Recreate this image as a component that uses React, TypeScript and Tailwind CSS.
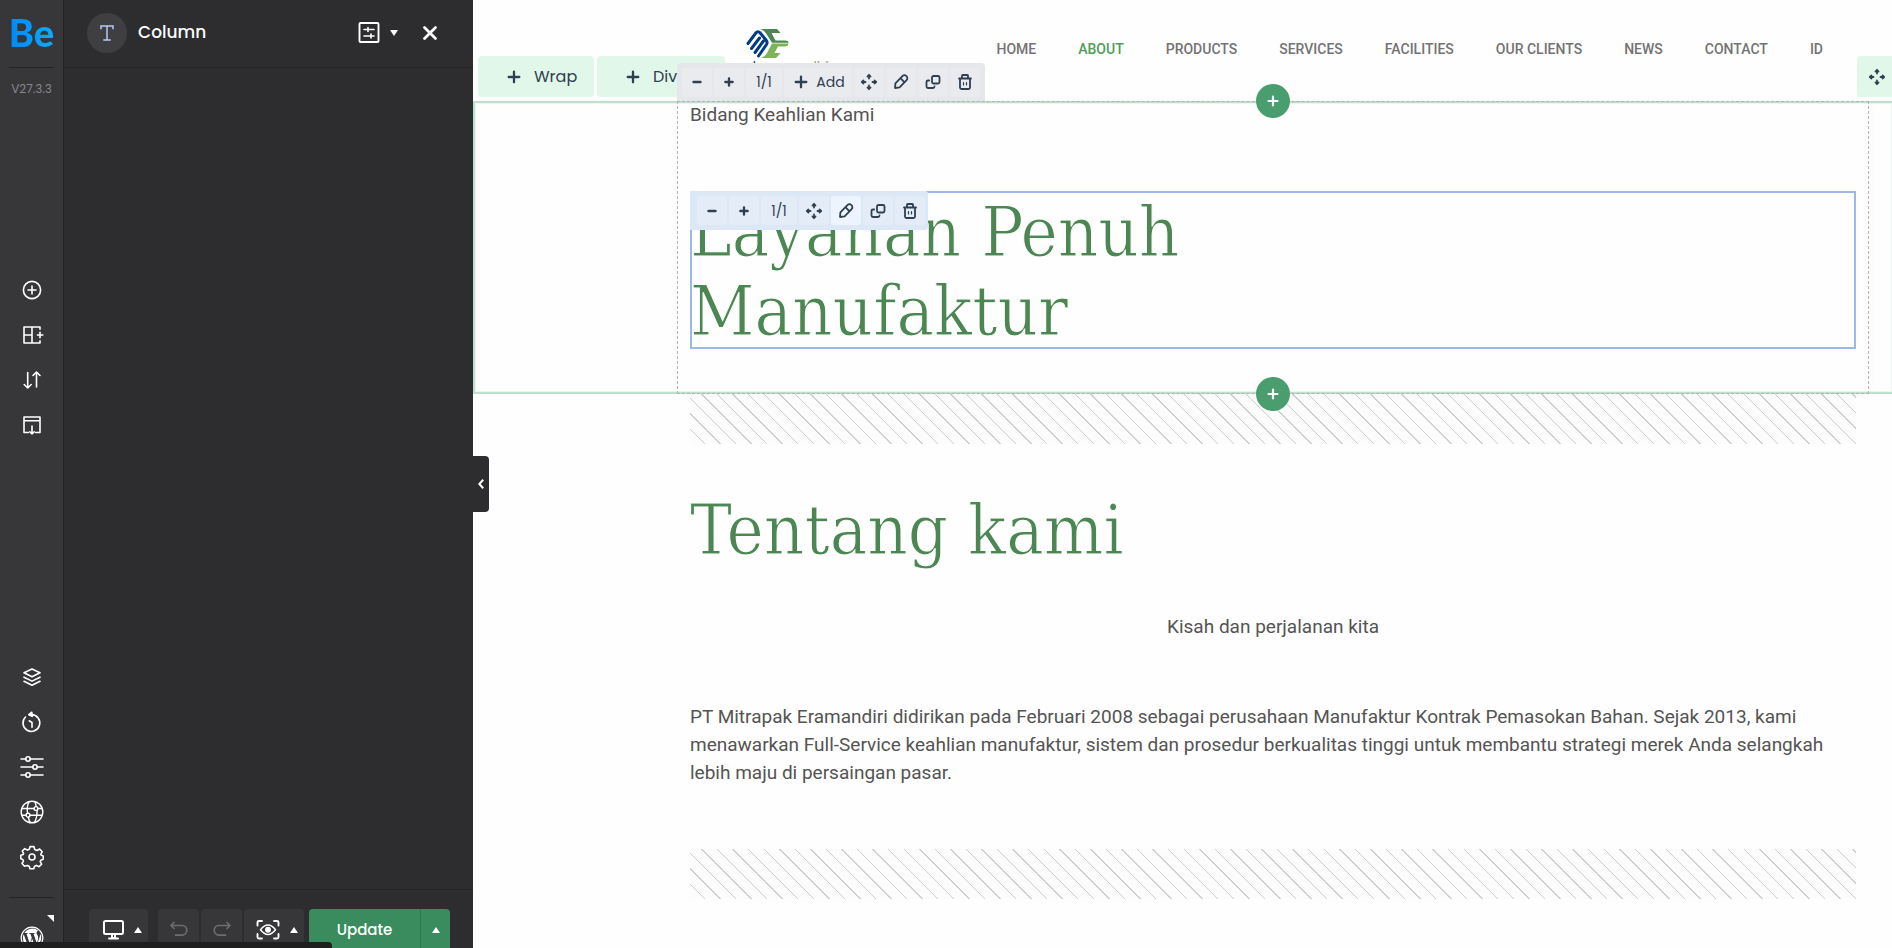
import type { ReactNode } from "react";

const uiFont = "font-['Poppins',Inter,sans-serif]";
const slabFont = "font-['Roboto_Slab','DejaVu_Serif_Condensed','DejaVu_Serif',serif] font-light [-webkit-text-stroke:1px_#fefefe]";

type IconProps = { children: ReactNode; size?: string; box?: string; width?: number };

function Icon({ children, size = "size-[26px]", box = "0 0 26 26", width = 1.6 }: IconProps) {
  return (
    <svg
      className={`${size} shrink-0`}
      viewBox={box}
      fill="none"
      stroke="currentColor"
      strokeWidth={width}
      strokeLinecap="round"
      strokeLinejoin="round"
      aria-hidden="true"
    >
      {children}
    </svg>
  );
}

const addItems = [
  {
    label: "Add element",
    icon: (
      <Icon>
        <circle cx="13" cy="13" r="8.6" />
        <path d="M13 9v8M9 13h8" />
      </Icon>
    ),
  },
  {
    label: "Prebuilt sections",
    icon: (
      <Icon>
        <path d="M21 7V5H5v16h16v-2M13 5v16M5 13h8M18.6 13h5M21 10.6v4.8" strokeLinecap="square" />
      </Icon>
    ),
  },
  {
    label: "Import / export",
    icon: (
      <Icon>
        <path d="M8.700 5.500V20.500M5.200 17.500l3.500 3.500 3.500-3.500M17.500 20V5M14 8.500l3.500-3.500L21 8.500" />
      </Icon>
    ),
  },
  {
    label: "Single page import",
    icon: (
      <Icon>
        <path d="M9.500 20.500H5V5h16v15.500h-4.500" />
        <path d="M5.500 8.800h15" strokeWidth="1.4" />
        <path d="M13 14v8M10.800 19.800 13 22l2.200-2.200" />
      </Icon>
    ),
  },
];

const toolItems = [
  {
    label: "Navigator",
    icon: (
      <Icon>
        <path d="m13 5 8 3.800-8 3.900-8-3.900zM5 13.200l8 3.900 8-3.900M5 17.300l8 3.900 8-3.900" />
      </Icon>
    ),
  },
  {
    label: "History",
    icon: (
      <Icon>
        <path d="M12.500 5.600a8.400 8.400 0 1 1-6 2.400" />
        <path d="m12.800 3.200-3 2.500 3.400 1.700z" fill="currentColor" />
        <path d="M10.200 11.800 13 13.500v4.700" />
      </Icon>
    ),
  },
  {
    label: "Theme settings",
    icon: (
      <Icon>
        <path d="M2 5h4.800M11.200 5H24M2 13h11.800M18.200 13H24M2 21h4.800M11.200 21H24" />
        <circle cx="9" cy="5" r="2.200" />
        <circle cx="16" cy="13" r="2.200" />
        <circle cx="9" cy="21" r="2.200" />
      </Icon>
    ),
  },
  {
    label: "Global sections",
    icon: (
      <Icon width={1.4}>
        <circle cx="13" cy="13" r="10.800" />
        <path d="M10 2.800C8.300 6 8 11 8.600 14.400M9.200 18c.5 2.200 1 4 2 5.500M16 2.800c.5 1.500 1 3 1.200 4.800M18 11.500c.2 4.500-.5 8.500-2.500 11.800M3.300 9.500H15M19 9.500h4M2.800 16.200h4M11 16.200h12" />
        <circle cx="17" cy="9.500" r="1.900" />
        <circle cx="9" cy="16.200" r="1.900" />
      </Icon>
    ),
  },
  {
    label: "Page options",
    icon: (
      <Icon>
        <path d="M11 2.600h4l.7 2.900 2.300 1 2.600-1.500 2.600 2.700-1.400 2.600.4 1 2 .6v3.400l-2.400.9-.6 1.500 1.400 2.500-2.600 2.600-2.600-1.400-1.900.8-.7 2.600h-3.800l-.8-2.600-1.900-.8L5.500 22.200 3 19.500l1.400-2.400-.6-1.700-2-.6v-3.500l2.300-.7.5-1.300L3.200 7 5.800 4.600l2.500 1.500 2-.8z" />
        <circle cx="13" cy="13" r="3" />
      </Icon>
    ),
  },
];

const navItems = ["HOME", "ABOUT", "PRODUCTS", "SERVICES", "FACILITIES", "OUR CLIENTS", "NEWS", "CONTACT", "ID"];

function MinusIcon() {
  return (
    <Icon size="size-5" box="0 0 20 20" width={2.4}>
      <path d="M6.500 10h7" />
    </Icon>
  );
}

function PlusIcon({ large }: { large?: boolean }) {
  return (
    <Icon size="size-5" box="0 0 20 20" width={2.3}>
      <path d={large ? "M10 4.700v10.600M4.700 10h10.600" : "M10 6.300v7.400M6.300 10h7.400"} />
    </Icon>
  );
}

function MoveIcon() {
  return (
    <Icon size="size-5" box="0 0 20 20" width={1.8}>
      <path d="M10 3v3.500M8.500 4.500 10 2.800l1.500 1.700M10 17v-3.500M8.500 15.500l1.500 1.700 1.500-1.700M3 10h3.500M4.500 8.500 2.800 10l1.700 1.500M17 10h-3.500M15.500 8.500l1.700 1.500-1.700 1.500" />
    </Icon>
  );
}

function PencilIcon() {
  return (
    <Icon size="size-5" box="0 0 20 20" width={1.8}>
      <path d="M4 16l.4-4.600 7-7.200a2.700 2.700 0 0 1 4.200 3.900L8.600 15.400zM10.200 6.800l2.800 3" />
    </Icon>
  );
}

function CloneIcon() {
  return (
    <Icon size="size-5" box="0 0 20 20" width={1.8}>
      <rect x="9" y="4" width="7.500" height="7.500" rx="1.500" />
      <path d="M6.200 8.500H5A1.500 1.500 0 0 0 3.500 10v4.500A1.500 1.500 0 0 0 5 16h5a1.500 1.500 0 0 0 1.500-1.500" />
    </Icon>
  );
}

function TrashIcon() {
  return (
    <Icon size="size-5" box="0 0 20 20" width={1.8}>
      <path d="M4 6.500h12M5 6.500v9A1.500 1.500 0 0 0 6.500 17h7a1.500 1.500 0 0 0 1.500-1.500v-9M7 6.500V3.800A.8.800 0 0 1 7.800 3h4.400a.8.800 0 0 1 .8.800v2.700" />
      <path d="M8.500 10.500v2.500M11.500 10.500v2.500" strokeWidth="1.2" />
    </Icon>
  );
}

function Caret({ down }: { down?: boolean }) {
  return (
    <svg className="h-[6px] w-2" viewBox="0 0 8 6" fill="currentColor" aria-hidden="true">
      <path d={down ? "M0 0h8L4 6z" : "M0 6h8L4 0z"} />
    </svg>
  );
}

type BarButtonProps = { label: string; className?: string; active?: boolean; children: ReactNode };

function BarButton({ label, className = "w-[30px]", active, children }: BarButtonProps) {
  return (
    <button
      aria-label={label}
      className={`flex h-[29px] items-center justify-center rounded-[3px] ${active ? "bg-[#eef4ff]" : "bg-white/20"} ${className}`}
    >
      {children}
    </button>
  );
}

function AddSection({ className }: { className: string }) {
  return (
    <button
      aria-label="Add section"
      className={`absolute left-1/2 z-20 flex size-[34px] -translate-x-1/2 items-center justify-center rounded-full bg-[#4a9d6e] text-white ${className}`}
    >
      <Icon size="size-5" box="0 0 20 20" width={2.2}>
        <path d="M10 5.500v9M5.500 10h9" />
      </Icon>
    </button>
  );
}

function Divider() {
  return (
    <div className="h-[50px] bg-[repeating-linear-gradient(45deg,#fcfcfc_0px,#fcfcfc_10px,#cfcfcf_10px,#cfcfcf_11px)]" />
  );
}

function Rail() {
  return (
    <aside className="flex w-16 shrink-0 flex-col items-center border-r border-[#232324] bg-[#37373a] text-white">
      <div className="flex h-[68px] w-[45px] items-center justify-center border-b border-[#232324] pb-1">
        <span className="bg-gradient-to-r from-[#0089f7] to-[#10aaff] bg-clip-text font-[Lato] text-[38px] leading-[48px] font-black text-transparent">
          Be
        </span>
      </div>
      <span className={`mt-3 text-[12px] leading-[18px] text-[#85858c] ${uiFont}`}>V27.3.3</span>
      <div className="flex flex-1 items-center pb-[38px]">
        <nav className="flex flex-col">
          {addItems.map((item) => (
            <button key={item.label} aria-label={item.label} className="flex size-[45px] items-center justify-center">
              {item.icon}
            </button>
          ))}
        </nav>
      </div>
      <nav className="flex flex-col">
        {toolItems.map((item) => (
          <button key={item.label} aria-label={item.label} className="flex size-[45px] items-center justify-center">
            {item.icon}
          </button>
        ))}
      </nav>
      <div className="relative mt-[18px] h-[51px] w-[45px] overflow-hidden border-t border-[#232324]">
        <button aria-label="WordPress" className="mx-auto mt-7 block">
          <svg className="size-6" viewBox="0 0 24 24" aria-hidden="true">
            <circle cx="12" cy="12" r="10.800" fill="none" stroke="#fff" strokeWidth="1.2" />
            <path
              fill="#fff"
              d="M2.900 12a9.100 9.100 0 0 0 5.200 8.200L3.700 8.300A9 9 0 0 0 2.900 12zm15.300-.5c0-1.100-.4-1.900-.8-2.500-.5-.8-.9-1.500-.9-2.300 0-.9.700-1.800 1.700-1.800h.1A9.100 9.100 0 0 0 4.400 7h.6c1 0 2.500-.1 2.500-.1.500 0 .5.700 0 .8 0 0-.5.1-1 .1l3.300 9.900 2-6-1.400-3.900-1-.1c-.5 0-.4-.8.100-.8 0 0 1.500.1 2.500.1s2.500-.1 2.500-.1c.5 0 .6.700.1.800 0 0-.5.1-1.100.1l3.300 9.800.9-3c.4-1.300.5-2.200.5-3.100zm-6 1.300-2.800 7.900a9.100 9.100 0 0 0 5.600-.1l-.1-.2zM20 7.600c.2 3.500-1.100 5.200-3.400 12.300A9.100 9.100 0 0 0 20 7.600z"
            />
          </svg>
        </button>
        <svg className="absolute top-[17px] right-0 size-[7px]" viewBox="0 0 7 7" fill="#fff" aria-hidden="true">
          <path d="M0 0h7v7z" />
        </svg>
      </div>
    </aside>
  );
}

function Panel() {
  return (
    <section className={`relative z-30 flex w-[409px] shrink-0 flex-col bg-[#2d2d2f] text-white ${uiFont}`}>
      <header className="flex h-[68px] items-center border-b border-[#232324] pr-[30px] pl-[23px] pb-px">
        <span className="flex size-10 items-center justify-center rounded-full bg-[#3f3f42] text-[#b9c6fb]">
          <Icon size="size-5" box="0 0 20 20" width={1.5}>
            <path d="M4 5.500V3h12v2.500M10 3v14M7 17h6" strokeLinecap="square" strokeLinejoin="miter" />
          </Icon>
        </span>
        <h2 className="ml-[11px] flex-1 text-[17px] font-medium">Column</h2>
        <button aria-label="Element options" className="flex items-center gap-2">
          <Icon size="size-[26px]" width={1.9}>
            <rect x="3.500" y="3" width="19" height="19" rx="1" />
            <path d="M8 9.500h10M8 16h10M12 7.500v4M15 14v4" strokeWidth="1.6" />
          </Icon>
          <Caret down />
        </button>
        <button aria-label="Close" className="ml-[19px]">
          <Icon width={2.8}>
            <path d="m7.500 7.500 11 11M18.500 7.500l-11 11" />
          </Icon>
        </button>
      </header>
      <div className="flex-1" />
      <footer className="flex h-[59px] items-start overflow-hidden border-t border-[#232324] pt-[19px] pl-[25px]">
        <button aria-label="Responsive view" className="flex h-[42px] w-[59px] shrink-0 items-center justify-center gap-2 rounded bg-[#37373a] pl-1">
          <Icon width={2}>
            <rect x="4" y="4" width="19" height="13" rx="1.500" />
            <path d="M12 18v3h3v-3M9 21.500h9" />
          </Icon>
          <Caret />
        </button>
        <button aria-label="Undo" className="ml-[10px] flex h-[42px] w-[41px] items-center justify-center rounded bg-[#37373a] text-[#6d6d70]">
          <Icon width={1.7}>
            <path d="M8 5.500 5 8.500l3 3M5.500 8.500h10.500a4.800 4.800 0 0 1 0 9.600H9.500" />
          </Icon>
        </button>
        <button aria-label="Redo" className="ml-[2px] flex h-[42px] w-[41px] items-center justify-center rounded bg-[#37373a] text-[#6d6d70]">
          <Icon width={1.7}>
            <path d="m18 5.500 3 3-3 3M20.500 8.500H10a4.800 4.800 0 0 0 0 9.600h6.500" />
          </Icon>
        </button>
        <button aria-label="Preview" className="ml-[2px] flex h-[42px] w-[60px] items-center justify-center gap-[9px] rounded bg-[#37373a] pl-1">
          <Icon width={1.9}>
            <path d="M2.500 8.500v-3a1.500 1.500 0 0 1 1.500-1.500h3M19 4h3a1.500 1.500 0 0 1 1.500 1.500v3M23.500 17v3a1.500 1.500 0 0 1-1.500 1.500h-3M7 21.500H4A1.500 1.500 0 0 1 2.500 20v-3" />
            <path d="M5.500 12.700q7.500-9.500 15 0-7.500 9.500-15 0z" strokeWidth="1.500" />
            <circle cx="13" cy="12.700" r="2" fill="currentColor" />
          </Icon>
          <Caret />
        </button>
        <button className="ml-[5px] h-[42px] w-[111px] rounded-l bg-[#3a8b5d] text-[15px] font-medium">Update</button>
        <button aria-label="More publish options" className="flex h-[42px] w-[30px] items-center justify-center rounded-r border-l border-[#2d754c] bg-[#3a8b5d]">
          <Caret />
        </button>
      </footer>
      <button
        aria-label="Collapse panel"
        className="absolute top-[456px] left-full flex h-14 w-4 items-center justify-center rounded-r bg-[#2d2d2f]"
      >
        <svg className="h-[10px] w-[6px]" viewBox="0 0 6 10" fill="none" stroke="#fff" strokeWidth="2" aria-hidden="true">
          <path d="M5.200.800 1.300 5l3.900 4.200" />
        </svg>
      </button>
    </section>
  );
}

function SiteHeader() {
  return (
    <header className="flex h-[101px] items-start justify-between pr-[69px] pl-[233px]">
      <a href="#" className="flex flex-col items-center pt-[29px] font-[Lato] text-[14px] leading-4">
        <svg className="h-[29px] w-[43px]" viewBox="0 0 43 29" aria-hidden="true">
          <path d="M14 0h17l3.500 4h-9l4 7.500H39q3.500 0 3.500 2.300H26L20.500 5Q18.500 1 14 0z" fill="#4b8653" />
          <path d="M42.500 14.500q0 3-3.500 3h-7L28.500 24h6L30 29H14q5-1 7-5l5-9.500z" fill="#7db458" />
          <path
            d="M2 14.500 10 3.800Q12 1.500 14 3.800L20 11q1.800 2.300.5 4.500L12.500 27M5.500 19.500 13.500 9M9 23.500 17.500 12"
            fill="none"
            stroke="#003c84"
            strokeWidth="3"
            strokeLinecap="round"
          />
        </svg>
        <span className="text-[#7db458]">
          <span className="text-[#003c84]">mitrapak</span> eramandiri
        </span>
      </a>
      <nav className="flex h-[98px] items-center gap-[42px] font-[Roboto] text-[14px] font-medium">
        {navItems.map((item) => (
          <a key={item} href="#" className={item === "ABOUT" ? "text-[#4f9c5b]" : "text-[#737373]"}>
            {item}
          </a>
        ))}
      </nav>
    </header>
  );
}

export default function App() {
  return (
    <div className="relative flex h-screen overflow-hidden bg-white">
      <Rail />
      <Panel />
      <main className="min-w-0 flex-1 overflow-hidden bg-[#fefefe] font-[Roboto] text-[19px] leading-7 text-[#545454]">
        <SiteHeader />

        {/* Section being edited */}
        <section className="relative h-[293px] border-y-2 border-l-2 border-[#bfe0cd] pr-[23px] pl-[202px] shadow-[inset_0_0_0_1px_#eaf6ef]">
          <div className={`absolute -top-[47px] left-[3px] flex gap-[3px] text-[16px] text-[#304050] ${uiFont}`}>
            <button className="flex h-[41px] w-[116px] items-center gap-[10px] rounded bg-[#e0f7ea] pl-[26px]">
              <PlusIcon large /> Wrap
            </button>
            <button className="flex h-[41px] w-32 items-center gap-[10px] rounded bg-[#e0f7ea] pl-[26px]">
              <PlusIcon large /> Divider
            </button>
          </div>
          <button
            aria-label="Move section"
            className="absolute -top-[47px] right-0 flex h-[41px] w-[35px] items-center justify-center rounded-l bg-[#e0f7ea] pl-1 text-[#304050]"
          >
            <MoveIcon />
          </button>

          <div className="relative -mt-[2px] h-[293px] border border-dashed border-[#b3b3b3] px-3 shadow-[0_0_10px_rgba(0,0,0,0.03)]">
            <AddSection className="-top-[18px]" />
            <div className={`absolute -top-[39px] -left-px z-10 flex h-[38px] items-center gap-[2px] rounded-t bg-[#e5e7eb] px-[5px] text-[14px] text-[#304050] ${uiFont}`}>
              <BarButton label="Decrease width"><MinusIcon /></BarButton>
              <BarButton label="Increase width"><PlusIcon /></BarButton>
              <BarButton label="Column size" className="w-9">1/1</BarButton>
              <BarButton label="Add item" className="w-[68px] gap-[5px]"><PlusIcon large /> Add</BarButton>
              <BarButton label="Move"><MoveIcon /></BarButton>
              <BarButton label="Edit"><PencilIcon /></BarButton>
              <BarButton label="Clone"><CloneIcon /></BarButton>
              <BarButton label="Delete"><TrashIcon /></BarButton>
            </div>

            <p className="leading-[26px]">Bidang Keahlian Kami</p>
            <div className="relative mt-[63px] h-[158px] border-2 border-[#9cb8e6]">
              <div className={`absolute -top-[2px] -left-[2px] flex h-[39px] items-center gap-[2px] rounded-r-[3px] bg-[#dce8f6] pr-[3px] pl-[7px] text-[14px] text-[#304050] ${uiFont}`}>
                <BarButton label="Decrease width"><MinusIcon /></BarButton>
                <BarButton label="Increase width"><PlusIcon /></BarButton>
                <BarButton label="Column size" className="w-9">1/1</BarButton>
                <BarButton label="Move"><MoveIcon /></BarButton>
                <BarButton label="Edit" active><PencilIcon /></BarButton>
                <BarButton label="Clone"><CloneIcon /></BarButton>
                <BarButton label="Delete"><TrashIcon /></BarButton>
              </div>
              <h2 className={`-mx-[2px] text-[70px] leading-[79px] text-[#4b8653] ${slabFont}`}>
                Layanan Penuh
                <br />
                Manufaktur
              </h2>
            </div>
            <AddSection className="-bottom-[18px]" />
          </div>
        </section>

        <section className="pr-9 pl-[217px]">
          <Divider />
          <h2 className={`mt-[47px] text-[70px] leading-[79px] text-[#4b8653] ${slabFont}`}>Tentang kami</h2>
          <p className="mt-[43px] text-center">Kisah dan perjalanan kita</p>
          <p className="mt-[62px]">
            PT Mitrapak Eramandiri didirikan pada Februari 2008 sebagai perusahaan Manufaktur Kontrak Pemasokan Bahan. Sejak 2013,
            kami menawarkan Full-Service keahlian manufaktur, sistem dan prosedur berkualitas tinggi untuk membantu strategi merek
            Anda selangkah lebih maju di persaingan pasar.
          </p>
          <div className="mt-[62px]">
            <Divider />
          </div>
        </section>
      </main>
      <div className="absolute bottom-0 left-0 z-40 h-[6px] w-[332px] rounded-tr bg-[#1f1f20]" />
    </div>
  );
}
